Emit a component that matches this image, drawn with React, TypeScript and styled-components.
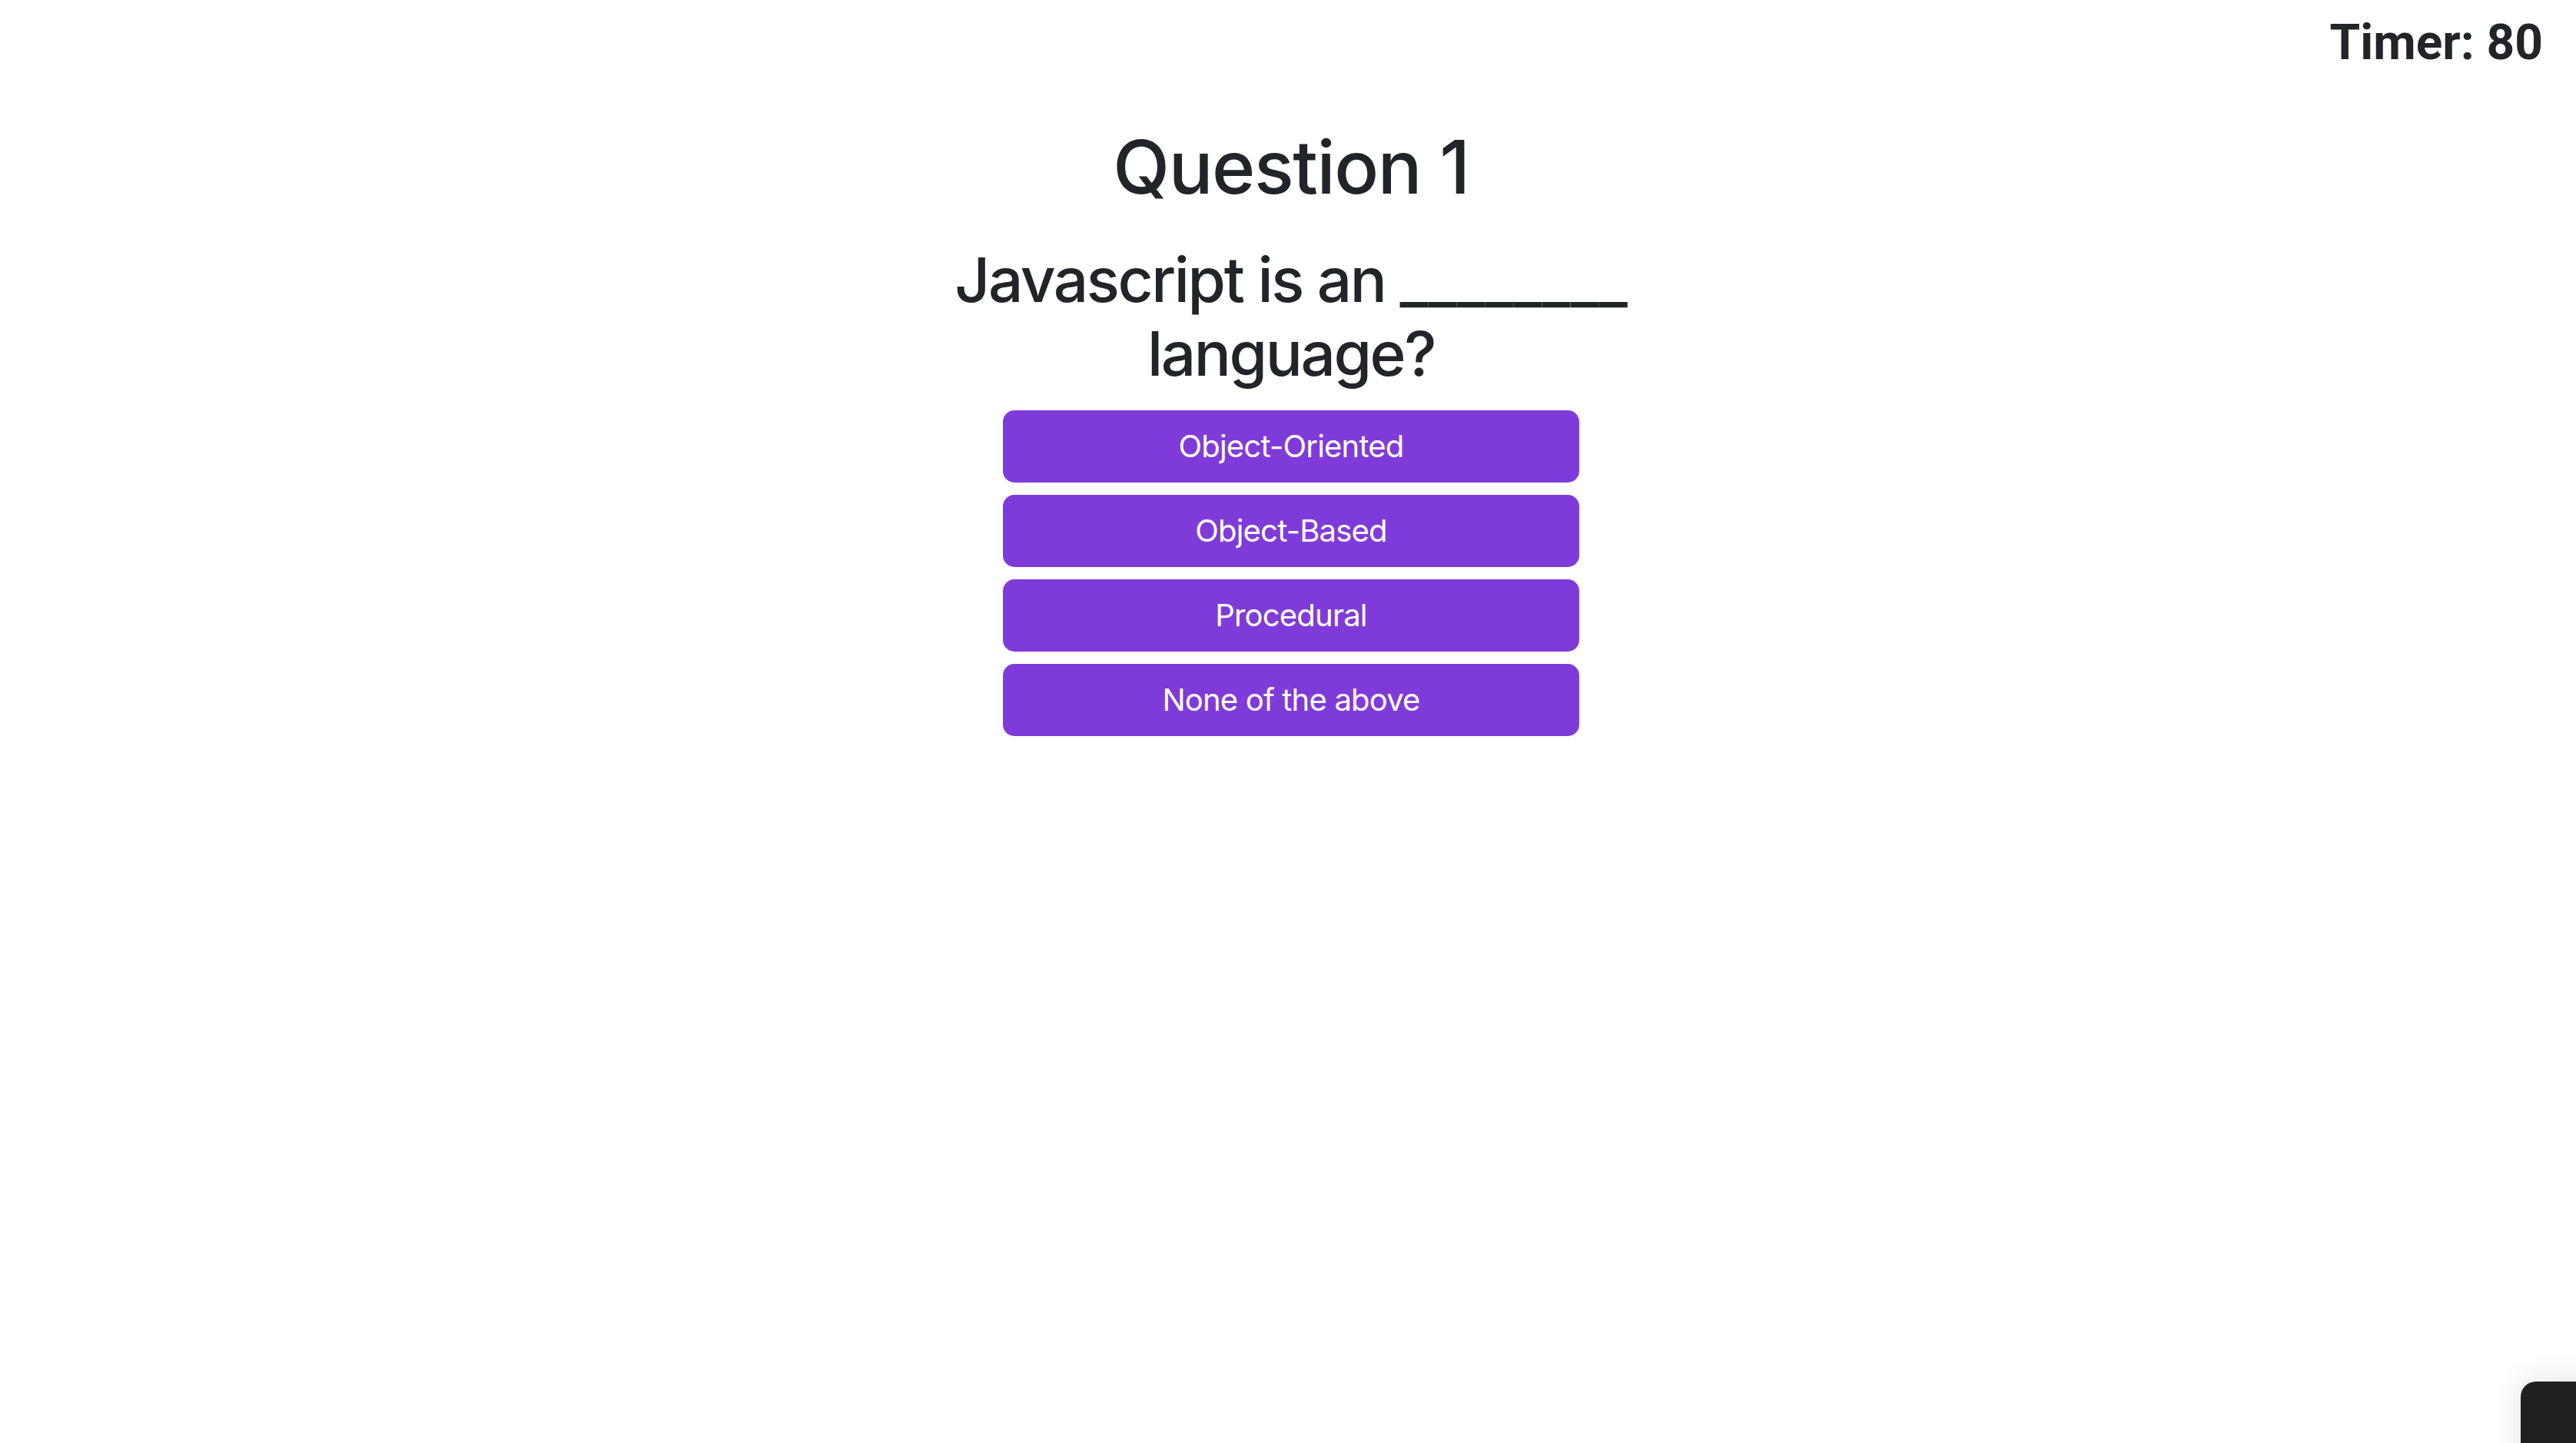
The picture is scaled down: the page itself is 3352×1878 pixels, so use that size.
import React from "react";
import styled, { createGlobalStyle } from "styled-components";

const GlobalStyle = createGlobalStyle`
  html, body {
    margin: 0;
    padding: 0;
    background: #ffffff;
  }
  body {
    font-family: Inter, "Noto Sans", "Liberation Sans", sans-serif;
    color: #212529;
  }
  * { box-sizing: border-box; }
`;

const Page = styled.div`
  min-height: 1878px;
  display: flex;
  flex-direction: column;
`;

const TopBar = styled.header`
  display: flex;
  justify-content: flex-end;
  padding: 17px 43px 0 0;
`;

const Timer = styled.h2`
  margin: 0;
  font-family: Roboto, Inter, "Liberation Sans", sans-serif;
  font-size: 64px;
  font-weight: 700;
  line-height: 77px;
`;

const Main = styled.main`
  display: flex;
  flex-direction: column;
  align-items: center;
  padding-left: 8px;
  margin-top: 66px;
`;

const Title = styled.h1`
  margin: 0;
  font-size: 96px;
  font-weight: 500;
  line-height: 115px;
  letter-spacing: -0.015em;
  text-align: center;
`;

const QuestionText = styled.h1`
  margin: 41px 0 0;
  max-width: 1000px;
  font-size: 80px;
  font-weight: 500;
  line-height: 96px;
  letter-spacing: -0.03em;
  text-align: center;
`;

const Blank = styled.span`
  letter-spacing: 0;
`;

const Options = styled.div`
  margin-top: 26px;
  width: 750px;
  display: flex;
  flex-direction: column;
  gap: 16px;
`;

const OptionButton = styled.button`
  width: 100%;
  border: none;
  border-radius: 15px;
  background: #7f3bd9;
  color: #ffffff;
  font-family: Inter, "Noto Sans", "Liberation Sans", sans-serif;
  font-size: 40px;
  font-weight: 400;
  line-height: 60px;
  letter-spacing: -0.02em;
  padding: 17px 32px;
  cursor: pointer;
`;

const DevWidget = styled.div`
  position: fixed;
  left: 3280px;
  top: 1798px;
  width: 120px;
  height: 120px;
  border-radius: 20px;
  background: #202020;
  box-shadow: 0 0 40px rgba(0, 0, 0, 0.12);
`;

const options = ["Object-Oriented", "Object-Based", "Procedural", "None of the above"];

export default function App() {
  return (
    <>
      <GlobalStyle />
      <Page>
        <TopBar>
          <Timer>Timer: 80</Timer>
        </TopBar>
        <Main>
          <Title>Question 1</Title>
          <QuestionText>
            Javascript is an <Blank>________</Blank> language?
          </QuestionText>
          <Options>
            {options.map((o) => (
              <OptionButton key={o}>{o}</OptionButton>
            ))}
          </Options>
        </Main>
      </Page>
      <DevWidget />
    </>
  );
}
